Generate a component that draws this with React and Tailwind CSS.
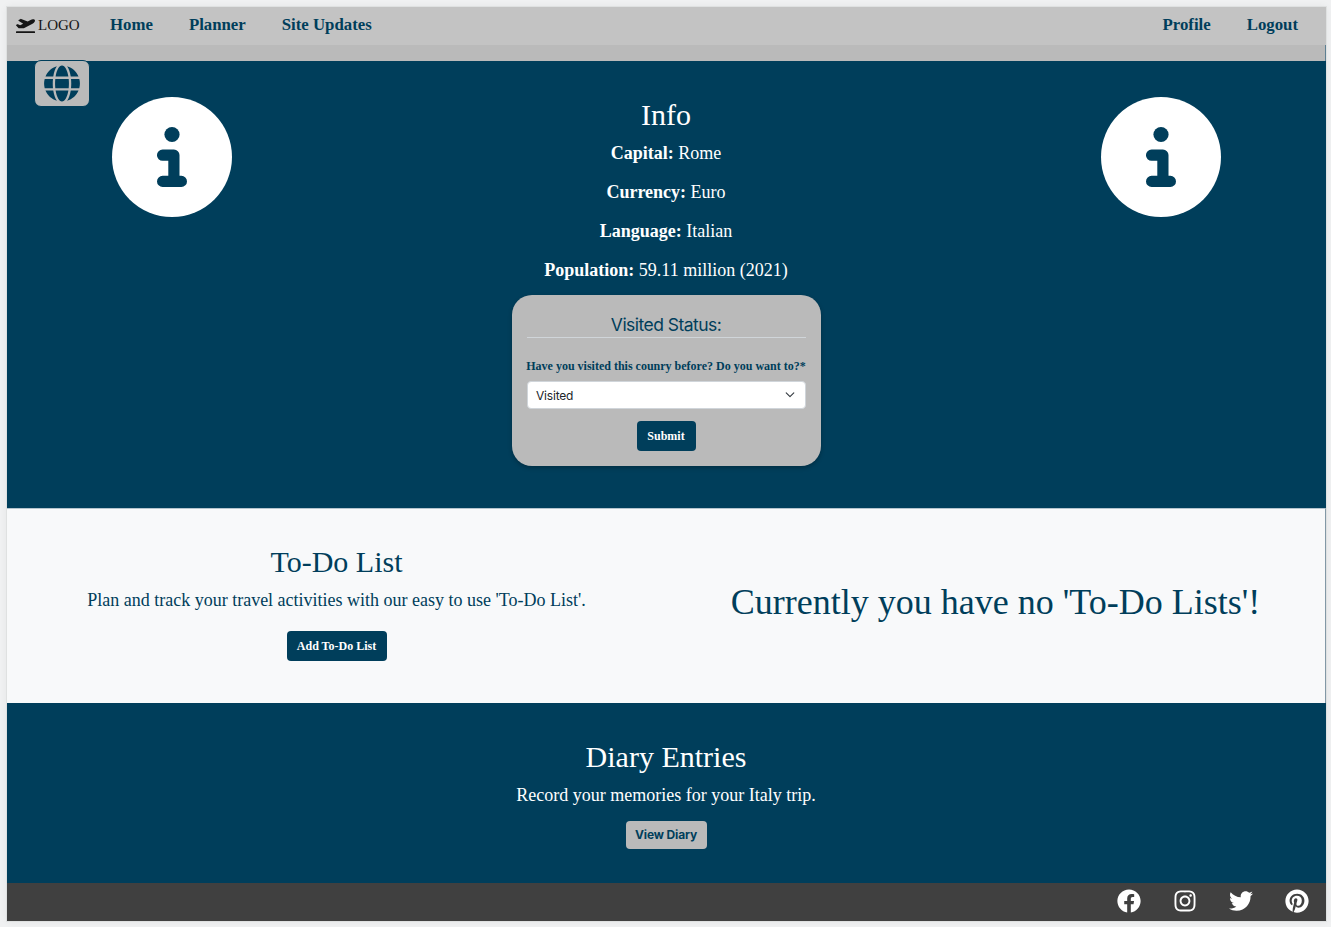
import React from "react";
import { FaPlaneDeparture, FaGlobe, FaFacebook, FaInstagram, FaTwitter, FaPinterest } from "react-icons/fa";

const serif = "font-['Liberation_Serif',serif]";
const sans = "font-['Inter',sans-serif]";

function InfoIcon() {
  return (
    <svg viewBox="0 0 120 120" className="h-[120px] w-[120px]" aria-hidden="true">
      <circle cx="60" cy="60" r="60" fill="#fff" />
      <circle cx="60" cy="37.5" r="7.6" fill="#003e5b" />
      <path
        d="M50.6 52.5h11.3a5.6 5.6 0 0 1 5.6 5.6v20.7h1.9a5.6 5.6 0 0 1 0 11.2H50.6a5.6 5.6 0 0 1 0-11.2h5.7V63.8h-5.7a5.65 5.65 0 0 1 0-11.3z"
        fill="#003e5b"
      />
    </svg>
  );
}

const facts = [
  ["Capital:", "Rome"],
  ["Currency:", "Euro"],
  ["Language:", "Italian"],
  ["Population:", "59.11 million (2021)"],
];

export default function App() {
  return (
    <div className={`h-[927px] w-[1331px] overflow-hidden bg-[#f0f1f2] pt-[7px] pr-[5px] pl-[7px] text-[18px] leading-[27px] text-[#003e5b] ${serif}`}>
      <div className="flex h-[914px] flex-col bg-[#003e5b] shadow-[0_0_0_1px_#dfe1e1,0_0_8px_#00000010]">
        <nav className="flex h-[38px] shrink-0 items-center bg-[#c3c3c3] pr-[28px] pl-[9px] text-[16.8px] font-bold">
          <a className="flex w-[94px] items-center gap-[3px] text-[15px] font-normal text-[#151515]">
            <FaPlaneDeparture className="mb-[2px] h-[19px] w-[19px]" />
            <span className="pb-px">LOGO</span>
          </a>
          <div className="flex flex-1 gap-9 pb-[3px]">
            <a>Home</a>
            <a>Planner</a>
            <a>Site Updates</a>
          </div>
          <div className="flex gap-9 pb-[3px]">
            <a>Profile</a>
            <a>Logout</a>
          </div>
        </nav>
        <div className="h-4 shrink-0 border-r border-[#5d7f92] bg-[#bababa]" />

        <section className="relative flex h-[447px] shrink-0 pt-9 text-white">
          <button className="absolute -top-px left-[27px] flex h-[47px] w-[56px] items-center justify-center rounded-[7px] border border-[#003e5b] bg-[#bababa] text-[#003e5b]">
            <FaGlobe className="h-[37px] w-9" />
          </button>
          <div className="flex w-1/4 justify-center"><InfoIcon /></div>
          <div className="flex w-1/2 flex-col items-center pr-px">
            <h2 className="mb-[7px] text-[30px] leading-9">Info</h2>
            {facts.map(([name, value]) => (
              <p key={name} className="mb-3"><b>{name}</b> {value}</p>
            ))}
            <form className="-mt-px flex h-[171px] w-[309px] flex-col items-center rounded-[20px] bg-[#bababa] px-[15px] pt-[17px] text-[#003e5b] shadow-[0_2px_4px_#00000040]">
              <h3 className={`h-[26px] w-full border-b border-[#d0d5d9] text-center text-[17.5px] leading-[26px] tracking-[-0.54px] ${sans}`}>Visited Status:</h3>
              <label className="mt-[19px] text-[12px] leading-[18px] font-bold whitespace-nowrap">Have you visited this counry before? Do you want to?*</label>
              <div className={`mt-[6px] flex h-[28px] w-full items-center justify-between rounded-[4px] border border-[#d0d5da] bg-white pr-[10px] pl-[8.5px] text-[12px] tracking-[-0.2px] text-[#212529] ${sans}`}>
                <span>Visited</span>
                <svg viewBox="0 0 10 8" className="h-2 w-[10px]" fill="none" stroke="#343a40" strokeWidth="1.1" strokeLinecap="round" strokeLinejoin="round"><path d="M1.2 1.8 5 5.6l3.8-3.8" /></svg>
              </div>
              <button type="button" className="mt-[12px] h-[30px] w-[59px] rounded-[4px] bg-[#003e5b] text-[12px] leading-[18px] font-bold text-white">Submit</button>
            </form>
          </div>
          <div className="flex w-1/4 justify-center"><InfoIcon /></div>
        </section>

        <section className="flex h-[195px] shrink-0 border-t border-r border-t-[#b4c4ce] border-r-[#8298a6] bg-[#f8f9fa]">
          <div className="flex w-1/2 flex-col items-center pt-[35px]">
            <h2 className="mb-[7px] text-[30px] leading-9">To-Do List</h2>
            <p>Plan and track your travel activities with our easy to use 'To-Do List'.</p>
            <button className="mt-[17px] h-[30px] w-[100px] rounded-[4px] bg-[#003e5b] text-[12px] leading-[18px] font-bold text-white">Add To-Do List</button>
          </div>
          <div className="flex w-1/2 items-center justify-center pb-2">
            <h1 className="text-[36px] leading-[43px] whitespace-nowrap">Currently you have no 'To-Do Lists'!</h1>
          </div>
        </section>

        <section className="flex h-[180px] shrink-0 flex-col items-center pr-px pt-9 text-white">
          <h2 className="mb-[7px] text-[30px] leading-9">Diary Entries</h2>
          <p>Record your memories for your Italy trip.</p>
          <button className={`mt-[12px] h-[28px] w-[81px] rounded-[4px] bg-[#bababa] text-[12px] leading-[18px] font-bold tracking-[-0.15px] text-[#003e5b] ${sans}`}>View Diary</button>
        </section>

        <footer className="flex h-[38px] shrink-0 items-center justify-end gap-8 bg-[#404040] pr-[17px] pb-[2px] text-white">
          <FaFacebook className="h-6 w-6" />
          <FaInstagram className="h-6 w-6" />
          <FaTwitter className="h-6 w-6" />
          <FaPinterest className="h-6 w-6" />
        </footer>
      </div>
    </div>
  );
}
